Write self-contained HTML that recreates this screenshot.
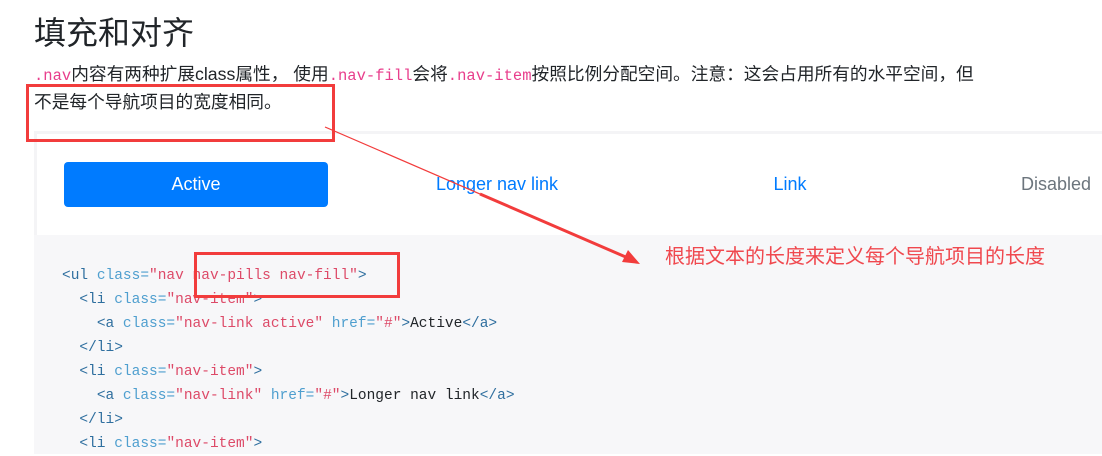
<!DOCTYPE html>
<html><head><meta charset="utf-8"><style>
body{margin:0;width:1102px;height:454px;overflow:hidden;background:#fff;position:relative;font-family:"Liberation Sans","Noto Sans CJK SC",sans-serif;color:#212529}
.abs{position:absolute;white-space:nowrap}
h1{position:absolute;left:34px;top:11px;margin:0;font-size:32px;font-weight:400;line-height:44px;font-family:"Liberation Sans","Noto Sans CJK SC",sans-serif}
.p{font-size:17.7px;line-height:28px}
code{font-family:"Liberation Mono",monospace;color:#e83e8c;font-size:15.5px}
.ex{position:absolute;left:34px;top:131px;width:1080px;height:101px;border:3px solid #f4f4f6;border-right:none;background:#fff}
.btn{position:absolute;left:64px;top:162px;width:264px;height:45px;background:#007bff;border-radius:4px;color:#fff;font-size:18px;line-height:45px;text-align:center}
.nl{position:absolute;top:162px;line-height:45px;font-size:18px;color:#007bff;transform:translateX(-50%)}
.pre{position:absolute;left:34px;top:235px;width:1068px;height:219px;background:#f7f7f9}
.code{position:absolute;left:62px;top:264px;font-family:"Liberation Mono",monospace;font-size:14.5px;line-height:24px;color:#212529;white-space:pre}
.t{color:#2f6f9f}.a{color:#4f9fcf}.s{color:#dd4a68}
.box{position:absolute;border:3px solid #f23c3c}
</style></head><body>
<h1>填充和对齐</h1>
<div class="abs p" style="left:34px;top:60px"><code>.nav</code>内容有两种扩展class属性， 使用<code>.nav-fill</code>会将<code>.nav-item</code>按照比例分配空间。注意：这会占用所有的水平空间，但</div>
<div class="abs p" style="left:34px;top:88px">不是每个导航项目的宽度相同。</div>
<div class="ex"></div>
<div class="btn">Active</div>
<div class="nl" style="left:497px">Longer nav link</div>
<div class="nl" style="left:790px">Link</div>
<div class="nl" style="left:1056px;color:#6c757d">Disabled</div>
<div class="pre"></div>
<div class="code"><span class="t">&lt;ul</span> <span class="a">class=</span><span class="s">"nav nav-pills nav-fill"</span><span class="t">&gt;</span>
  <span class="t">&lt;li</span> <span class="a">class=</span><span class="s">"nav-item"</span><span class="t">&gt;</span>
    <span class="t">&lt;a</span> <span class="a">class=</span><span class="s">"nav-link active"</span> <span class="a">href=</span><span class="s">"#"</span><span class="t">&gt;</span>Active<span class="t">&lt;/a&gt;</span>
  <span class="t">&lt;/li&gt;</span>
  <span class="t">&lt;li</span> <span class="a">class=</span><span class="s">"nav-item"</span><span class="t">&gt;</span>
    <span class="t">&lt;a</span> <span class="a">class=</span><span class="s">"nav-link"</span> <span class="a">href=</span><span class="s">"#"</span><span class="t">&gt;</span>Longer nav link<span class="t">&lt;/a&gt;</span>
  <span class="t">&lt;/li&gt;</span>
  <span class="t">&lt;li</span> <span class="a">class=</span><span class="s">"nav-item"</span><span class="t">&gt;</span></div>
<div class="box" style="left:26px;top:84px;width:303px;height:52px"></div>
<div class="box" style="left:194px;top:252px;width:200px;height:40px"></div>
<svg class="abs" style="left:0;top:0" width="1102" height="454">
<line x1="325" y1="127" x2="628" y2="258" stroke="#f23c3c" stroke-width="1.2"/>
<line x1="480" y1="194" x2="628" y2="258" stroke="#f23c3c" stroke-width="3"/>
<polygon points="640,264 622,262 628,250" fill="#f23c3c"/>
</svg>
<div class="abs" style="left:665px;top:244px;font-size:20px;line-height:26px;color:#f0484e;font-family:'Liberation Sans','Noto Sans CJK SC',sans-serif">根据文本的长度来定义每个导航项目的长度</div>
</body></html>
